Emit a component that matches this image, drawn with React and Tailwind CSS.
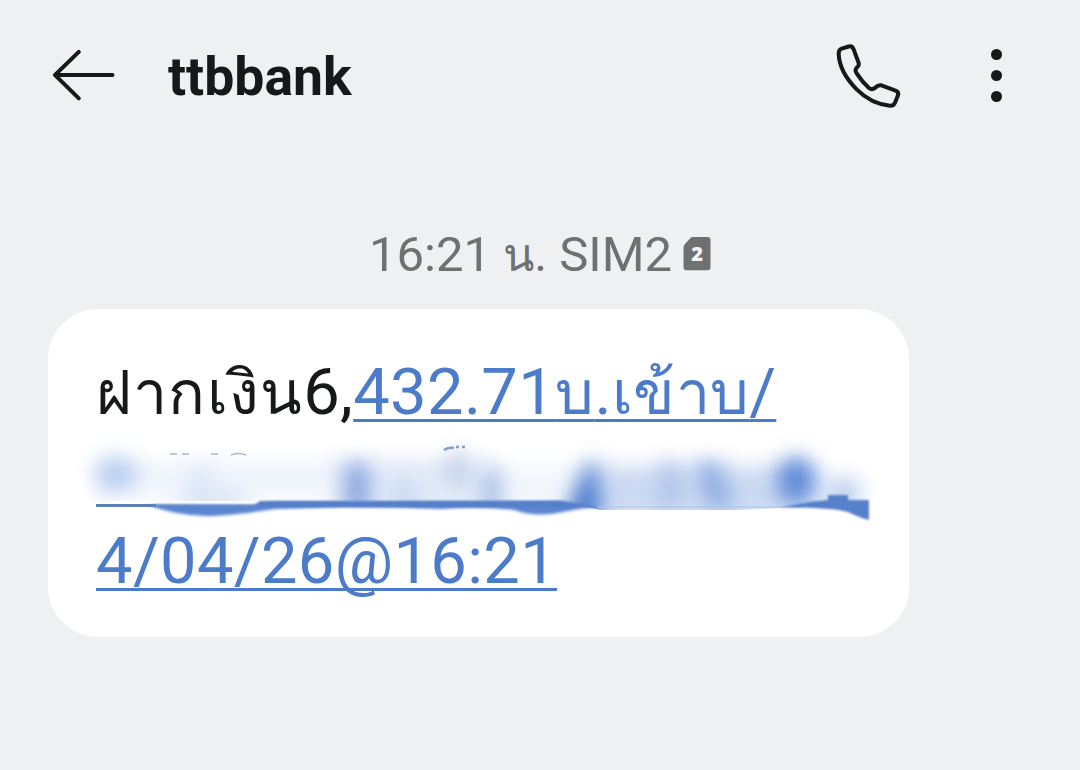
function BackIcon() {
    return (
        <svg width="64" height="52" viewBox="0 0 64 52" fill="none" stroke="#17181a" strokeWidth="3.9" strokeLinecap="round" strokeLinejoin="round">
            <path d="M60.500 26H3M26.800 2.800L3 26l23.800 23.300" />
        </svg>
    );
}

function PhoneIcon() {
    return (
        <svg width="66" height="66" viewBox="52 40 198 198" fill="none" stroke="#17181a" strokeWidth="12" strokeLinejoin="round">
            <path d="M69 54L90 47.500Q101 45 105 56L120 97Q122 105 115 110Q107 118 114 128Q130 153 151 172Q160 179 170 171Q178 162 188 164L229 179Q241 183 238 194L229 216Q225 226 214 225Q158 220 114 176Q62 124 60 69Q60 57 69 54Z" />
        </svg>
    );
}

function SimIcon() {
    return (
        <div className="relative -mt-[3px] h-[34px] w-[28px]">
            <svg className="block" width="28" height="34" viewBox="0 0 28 34">
                <path d="M9.500 0H24.500Q27.500 0 27.500 3V30Q27.500 33.300 24.500 33.300H3.500Q0.500 33.300 0.500 30V10.500Q0.500 8.500 2 7L7 1.500Q8.200 0 9.500 0Z" fill="#6f7071" />
            </svg>
            <span className="absolute inset-0 text-center font-['Open_Sans'] text-[20px] leading-[34px] font-extrabold text-[#f4f5f6]">2</span>
        </div>
    );
}

// account number, smeared out by hand
function RedactedLine() {
    return (
        <svg className="-ml-[36px] block shrink-0" width="840" height="84" viewBox="60 434 840 84" overflow="visible">
            <defs>
                <filter id="soft" x="-80%" y="-80%" width="260%" height="260%"><feGaussianBlur stdDeviation="10" /></filter>
                <filter id="mid" x="-120%" y="-80%" width="340%" height="260%"><feGaussianBlur stdDeviation="10" /></filter>
                <filter id="edge" x="-10%" y="-60%" width="120%" height="220%"><feGaussianBlur stdDeviation="1.8" /></filter>
                <filter id="fade" x="-5%" y="-60%" width="110%" height="220%"><feGaussianBlur stdDeviation="0.9" /></filter>
                <clipPath id="above"><path d="M60 425H900V500H868L830 503L800 507L740 510H600L560 501H60Z" /></clipPath>
            </defs>
            <g clipPath="url(#above)" filter="url(#fade)">
                <g filter="url(#soft)">
                    <rect x="95" y="460" width="250" height="38" fill="#f0f4fc" />
                    <rect x="335" y="460" width="165" height="50" fill="#e0e9f7" />
                    <rect x="500" y="468" width="75" height="40" fill="#f2f5fc" />
                    <rect x="575" y="466" width="240" height="54" fill="#cbdaf2" />
                    <rect x="800" y="476" width="62" height="36" fill="#e0e9f7" />
                    <ellipse cx="116" cy="474" rx="22" ry="18" fill="#b9cef0" />
                    <rect x="190" y="466" width="22" height="44" fill="#dae5f7" />
                    <rect x="180" y="492" width="65" height="18" fill="#d8e2f4" />
                    <ellipse cx="457" cy="469" rx="13" ry="18" fill="#c2d0e8" />
                </g>
                <g filter="url(#mid)">
                    <rect x="345" y="464" width="24" height="52" fill="#89a5df" />
                    <path d="M402 472L388 510H424Z" fill="#c7d7f0" />
                    <rect x="484" y="472" width="16" height="42" fill="#a1bbe6" />
                    <path d="M594 456L562 520H602Z" fill="#4879cf" />
                    <rect x="660" y="464" width="20" height="44" fill="#afc3e9" />
                    <path d="M696 462H719L735 508H706Z" fill="#91afe3" />
                    <ellipse cx="796" cy="481" rx="19" ry="24" fill="#628cd8" />
                    <rect x="836" y="484" width="16" height="24" fill="#a9c1e7" />
                </g>
            </g>
            <path d="M148 505H252L275 502H380L560 501L597 507Q580 508 563 512Q536 518 514 510Q480 506 440 509Q400 507 342 507L275 509Q230 516 207 516Q178 516 148 505Z" fill="#5a85d0" filter="url(#edge)" />
            <path d="M155 504.500L255 505L260 501H560L598 507H155Z" fill="#557fc7" filter="url(#fade)" />
            <rect x="96" y="504" width="60" height="3" fill="#5b80bd" />
            <path d="M598 507H785" stroke="#afc3e4" strokeWidth="1" fill="none" />
            <path d="M780 507.500L812 501.500L828 500V495H848V500H869V520Q860 518 848 512Q830 507 780 507.500Z" fill="#5781ca" filter="url(#fade)" />
            <path d="M170 454h7M182 454h7M211 454h7M231 455q7-3 15 0" stroke="#a5b8d4" strokeWidth="1.500" fill="none" />
            <path d="M444 450q5-3 10-2M456 447h3M462 447h3" stroke="#879dbd" strokeWidth="2.500" fill="none" />
        </svg>
    );
}

export default function App() {
    return (
        <div className="h-[770px] w-[1080px] overflow-hidden bg-[#eff0f2] font-[Roboto,sans-serif]">
            <header className="flex h-[150px] items-center pl-[52px]">
                <BackIcon />
                <h1 className="mt-[3px] ml-[52px] text-[53.5px] leading-[62px] font-bold text-[#17181a]">ttbbank</h1>
                <div className="mt-[3px] ml-auto pr-[88px]"><PhoneIcon /></div>
                <div className="mr-[78px] flex w-[12px] flex-col items-center gap-[10px]">
                    <span className="size-[11px] rounded-full bg-[#17181a]" />
                    <span className="size-[11px] rounded-full bg-[#17181a]" />
                    <span className="size-[11px] rounded-full bg-[#17181a]" />
                </div>
            </header>

            <div className="mt-[75px] flex h-[60px] items-center justify-center gap-[11px] text-[49px] leading-[60px] text-[#6f7071]">
                <span className="whitespace-nowrap">16:21 <span className="text-[46px]">น</span>. SIM2</span>
                <SimIcon />
            </div>

            <main className="mt-[24px] ml-[48px] flex h-[328px] w-[861px] flex-col rounded-[50px] bg-white pt-[41px] pl-[48px] text-[65px] leading-[84px] tracking-[0.35px] text-[#17181a]">
                <p className="h-[84px] whitespace-nowrap">
                    <span className="text-[61px] tracking-[1.2px]">ฝากเงิน</span>6,<a className="text-[#4c7bc9] underline decoration-[3px] underline-offset-[5px] [text-decoration-skip-ink:none]">432.71<span className="text-[61px] tracking-[0.3px]">บ</span>.<span className="text-[61px] tracking-[0.3px]">เข้าบ</span>/</a>
                </p>
                <RedactedLine />
                <p className="mt-px h-[84px] whitespace-nowrap">
                    <a className="text-[#4c7bc9] underline decoration-[3px] underline-offset-[5px] [text-decoration-skip-ink:none]">4/04/26@16:21</a>
                </p>
            </main>
        </div>
    );
}
